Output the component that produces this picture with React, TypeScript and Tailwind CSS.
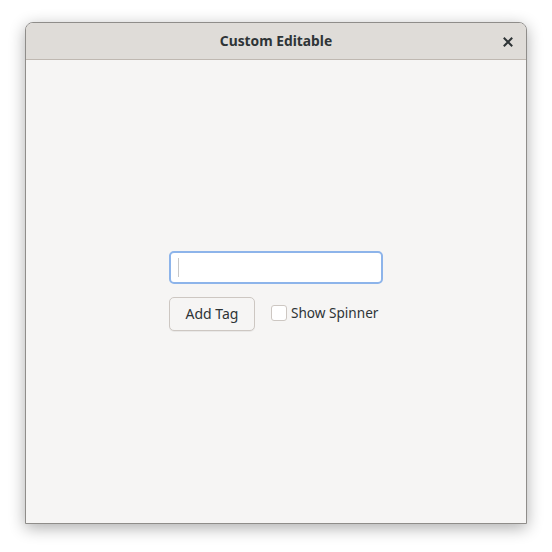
export default function App() {
  return (
    <div className="w-[552px] h-[552px] bg-white pt-[22px] pl-[25px]" style={{ fontFamily: '"Noto Sans", "Open Sans", sans-serif' }}>
      <div className="w-[502px] h-[502px] flex flex-col rounded-t-[8px] border border-[#8f8d8a] bg-[#f6f5f4] shadow-[0_4px_16px_rgba(0,0,0,0.32)] overflow-hidden">
        <div className="relative h-[37px] shrink-0 flex items-center justify-center bg-[#dfdcd8] border-b border-[#bfb8b1]">
          <span className="text-[13.8px] font-bold text-[#2e3436]">Custom Editable</span>
          <svg className="absolute right-[13px] top-[14px]" width="10" height="10" viewBox="0 0 10 10">
            <path d="M1.5 1.5 L8.5 8.5 M8.5 1.5 L1.5 8.5" stroke="#2e3436" strokeWidth="2" strokeLinecap="square" />
          </svg>
        </div>
        <div className="flex-1 flex items-center justify-center pb-[2px]">
          <div className="w-[214px] flex flex-col gap-[13px]">
            <div className="h-[33px] rounded-[5px] border-2 border-[#8db4ea] bg-white flex items-center pl-[7px]">
              <div className="w-px h-[19px] bg-[#c8c8c8]" />
            </div>
            <div className="flex items-center gap-[16px]">
              <button className="w-[86px] h-[34px] rounded-[5px] border border-[#cdc7c2] bg-[#f6f5f4] text-[14px] text-[#2e3436] shadow-[0_1px_0_rgba(0,0,0,0.05)] whitespace-nowrap">
                Add Tag
              </button>
              <label className="flex items-center gap-[4px] text-[13.6px] text-[#2e3436] whitespace-nowrap">
                <span className="w-[16px] h-[16px] rounded-[3px] border border-[#cdc7c2] bg-white" />
                Show Spinner
              </label>
            </div>
          </div>
        </div>
      </div>
    </div>
  );
}
